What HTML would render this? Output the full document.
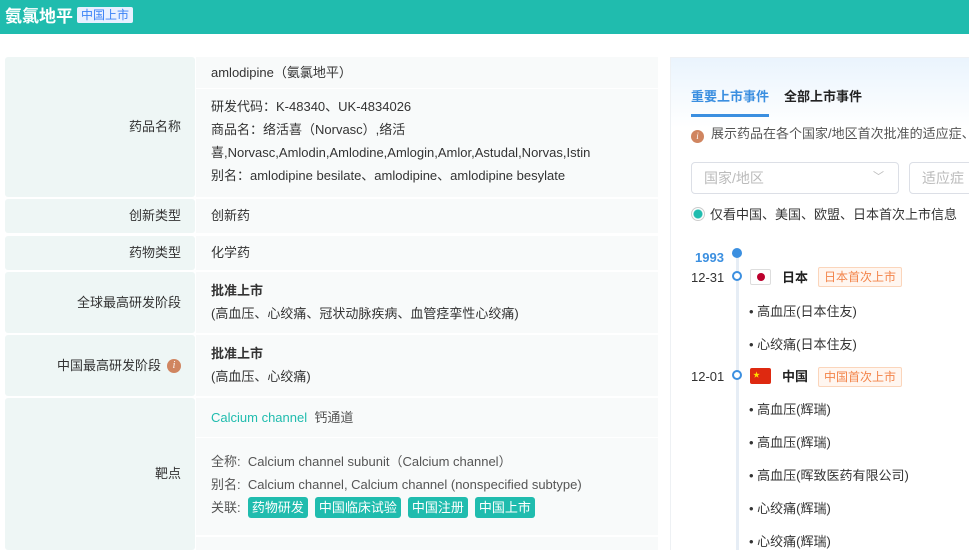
<!DOCTYPE html>
<html><head><meta charset="utf-8"><style>
*{margin:0;padding:0;box-sizing:border-box}
html,body{width:969px;height:550px;overflow:hidden}
body{background:#fff;font-family:"Liberation Sans","Noto Sans CJK SC",sans-serif;font-size:13px;color:#333;position:relative;line-height:18px}
.hd{position:absolute;left:0;top:0;width:969px;height:34px;background:#20bcae}
.hd .t{position:absolute;left:5px;top:7px;color:#fff;font-size:17px;font-weight:bold;line-height:20px}
.hd .b{position:absolute;left:77px;top:7px;background:#e8f0ff;color:#3b82f6;font-size:12px;padding:0 4px;height:16px;line-height:16px;border-radius:2px}
.lab{position:absolute;left:5px;width:190px;background:#eef6f5;text-align:right;padding-right:14px;font-size:13px;color:#333;display:flex;align-items:center;justify-content:flex-end;border-radius:3px}
.val{position:absolute;left:196px;width:462px;background:#f8fafa;padding-left:15px;font-size:13px;color:#333}
.ln{line-height:23px}
b{font-weight:bold}
.tag{display:inline-block;background:#20bcae;color:#fff;padding:0 4px;height:21px;line-height:21px;border-radius:3px;margin-right:7px}
.rp{position:absolute;left:670px;top:57px;width:299px;height:493px;border:1px solid #eef1f4;border-right:none;border-bottom:none;background:linear-gradient(180deg,#eaf4fd 0,#fff 70px,#fff 100%);overflow:hidden}
.rp>div{line-height:18px}
.gr{color:#555}
</style></head><body>
<div class="hd"><span class="t">氨氯地平</span><span class="b">中国上市</span></div>

<div class="lab" style="top:57px;height:140px">药品名称</div>
<div class="val" style="top:57px;height:31px;line-height:31px">amlodipine（氨氯地平）</div>
<div class="val" style="top:89px;height:108px;padding-top:6px">
<div class="ln">研发代码：K-48340、UK-4834026</div>
<div class="ln">商品名：络活喜（Norvasc）,络活</div>
<div class="ln">喜,Norvasc,Amlodin,Amlodine,Amlogin,Amlor,Astudal,Norvas,Istin</div>
<div class="ln">别名：amlodipine besilate、amlodipine、amlodipine besylate</div>
</div>

<div class="lab" style="top:199px;height:34px">创新类型</div>
<div class="val" style="top:199px;height:34px;line-height:34px">创新药</div>
<div class="lab" style="top:236px;height:34px">药物类型</div>
<div class="val" style="top:236px;height:34px;line-height:34px">化学药</div>

<div class="lab" style="top:272px;height:61px">全球最高研发阶段</div>
<div class="val" style="top:272px;height:61px;padding-top:7px"><div class="ln"><b>批准上市</b></div><div class="ln">(高血压、心绞痛、冠状动脉疾病、血管痉挛性心绞痛)</div></div>

<div class="lab" style="top:335px;height:61px">中国最高研发阶段 <span style="display:inline-block;width:14px;height:14px;border-radius:50%;background:#d08560;color:#fff;font-size:10px;line-height:14px;text-align:center;font-style:italic;margin-left:6px;font-family:'Liberation Serif',serif">i</span></div>
<div class="val" style="top:335px;height:61px;padding-top:7px"><div class="ln"><b>批准上市</b></div><div class="ln">(高血压、心绞痛)</div></div>

<div class="lab" style="top:398px;height:152px">靶点</div>
<div class="val" style="top:398px;height:39px;line-height:39px"><span style="color:#20bcae">Calcium channel</span>&nbsp;&nbsp;<span class="gr">钙通道</span></div>
<div class="val gr" style="top:438px;height:97px;padding-top:12px">
<div class="ln">全称:&nbsp; Calcium channel subunit（Calcium channel）</div>
<div class="ln">别名:&nbsp; Calcium channel, Calcium channel (nonspecified subtype)</div>
<div style="line-height:23px">关联:&nbsp; <span class="tag">药物研发</span><span class="tag">中国临床试验</span><span class="tag">中国注册</span><span class="tag">中国上市</span></div>
</div>
<div class="val" style="top:537px;height:13px"></div>

<div class="rp">
<div style="position:absolute;left:20px;top:30px;color:#3b8fe0;font-weight:bold;font-size:13px">重要上市事件</div>
<div style="position:absolute;left:20px;top:56px;width:78px;height:3px;background:#3b8fe0"></div>
<div style="position:absolute;left:113px;top:30px;color:#222;font-weight:bold;font-size:13px">全部上市事件</div>
<div style="position:absolute;left:20px;top:67px;white-space:nowrap;color:#555;font-size:13px"><span style="display:inline-block;width:13px;height:13px;border-radius:50%;background:#d08560;color:#fff;font-size:9px;line-height:13px;text-align:center;font-style:italic;vertical-align:-1px;margin-right:7px;font-family:'Liberation Serif',serif">i</span>展示药品在各个国家/地区首次批准的适应症、</div>
<div style="position:absolute;left:20px;top:104px;width:208px;height:32px;border:1px solid #dcdfe6;border-radius:4px;color:#bbb;font-size:14px;line-height:30px;padding-left:12px">国家/地区<span style="position:absolute;right:14px;top:0;color:#bbb;font-size:11px;line-height:28px">﹀</span></div>
<div style="position:absolute;left:238px;top:104px;width:80px;height:32px;border:1px solid #dcdfe6;border-radius:4px;color:#bbb;font-size:14px;line-height:30px;padding-left:12px">适应症</div>
<div style="position:absolute;left:20px;top:148px;white-space:nowrap;color:#333"><span style="display:inline-block;width:14px;height:14px;border-radius:50%;border:1px solid #ccc;background:radial-gradient(#20bcae 4px,#fff 5px);vertical-align:-2px;margin-right:5px"></span>仅看中国、美国、欧盟、日本首次上市信息</div>

<div style="position:absolute;left:65px;top:195px;width:3px;height:310px;background:#e6edf5"></div>
<div style="position:absolute;left:61px;top:190px;width:10px;height:10px;border-radius:50%;background:#3b8fe0"></div>
<div style="position:absolute;left:24px;top:191px;color:#3b8fe0;font-weight:bold;font-size:13px">1993</div>

<div style="position:absolute;left:20px;top:211px;color:#333">12-31</div>
<div style="position:absolute;left:61px;top:213px;width:10px;height:10px;border-radius:50%;border:2px solid #3b8fe0;background:#fff"></div>
<div style="position:absolute;left:79px;top:211px;width:21px;height:16px;border:1px solid #ddd;border-radius:2px;background:#fff"><div style="width:8px;height:8px;border-radius:50%;background:#bc002d;margin:3px auto"></div></div>
<div style="position:absolute;left:111px;top:211px;font-weight:bold;color:#222">日本</div>
<div style="position:absolute;left:147px;top:209px;border:1px solid #fbd5bb;background:#fff6f0;color:#f3844a;font-size:12px;padding:0 5px;height:20px;line-height:18px;border-radius:2px">日本首次上市</div>
<div style="position:absolute;left:78px;top:237px;color:#333;line-height:33px">• 高血压(日本住友)<br>• 心绞痛(日本住友)</div>

<div style="position:absolute;left:20px;top:310px;color:#333">12-01</div>
<div style="position:absolute;left:61px;top:312px;width:10px;height:10px;border-radius:50%;border:2px solid #3b8fe0;background:#fff"></div>
<div style="position:absolute;left:79px;top:310px;width:21px;height:16px;background:#de2910;border-radius:2px;color:#ffde00;font-size:7px;line-height:16px;padding-left:3px">★</div>
<div style="position:absolute;left:111px;top:310px;font-weight:bold;color:#222">中国</div>
<div style="position:absolute;left:147px;top:309px;border:1px solid #fbd5bb;background:#fff6f0;color:#f3844a;font-size:12px;padding:0 5px;height:20px;line-height:18px;border-radius:2px">中国首次上市</div>
<div style="position:absolute;left:78px;top:335px;color:#333;line-height:33px">• 高血压(辉瑞)<br>• 高血压(辉瑞)<br>• 高血压(晖致医药有限公司)<br>• 心绞痛(辉瑞)<br>• 心绞痛(辉瑞)</div>
</div>
</body></html>
